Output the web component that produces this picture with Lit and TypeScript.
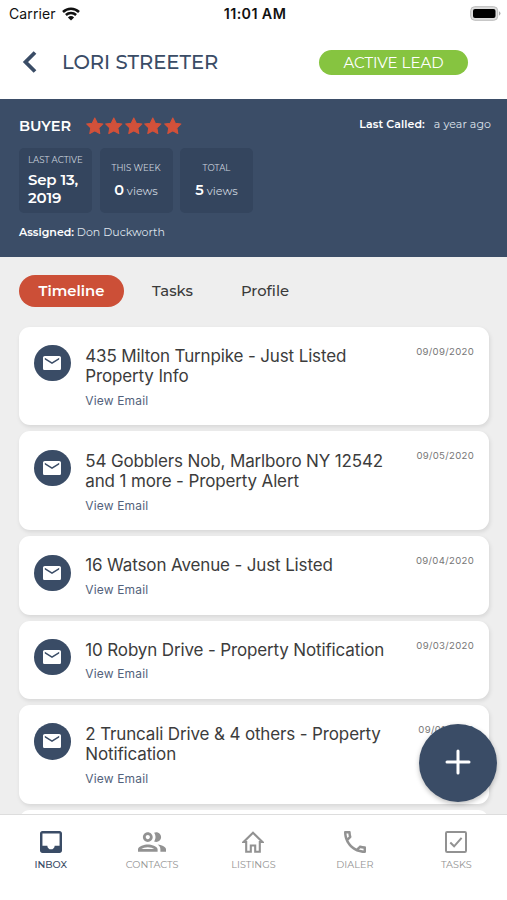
import { LitElement, html, css, svg } from "lit";
import { customElement, property, state } from "lit/decorators.js";
import { classMap } from "lit/directives/class-map.js";

interface Entry {
  lines: string[];
  date: string;
}

const ENTRIES: Entry[] = [
  { lines: ["435 Milton Turnpike - Just Listed", "Property Info"], date: "09/09/2020" },
  { lines: ["54 Gobblers Nob, Marlboro NY 12542", "and 1 more - Property Alert"], date: "09/05/2020" },
  { lines: ["16 Watson Avenue - Just Listed"], date: "09/04/2020" },
  { lines: ["10 Robyn Drive - Property Notification"], date: "09/03/2020" },
  { lines: ["2 Truncali Drive & 4 others - Property", "Notification"], date: "09/01/2020" },
];

const NAV = [
  {
    label: "INBOX",
    cls: "inbox",
    box: "3 3 18 18",
    icon: svg`<path d="M19 3H5c-1.1 0-2 .9-2 2v14c0 1.1.9 2 2 2h14c1.1 0 2-.9 2-2V5c0-1.1-.9-2-2-2zm0 12h-4c0 1.66-1.35 3-3 3s-3-1.34-3-3H5V5h14v10z"/>`,
  },
  {
    label: "CONTACTS",
    cls: "contacts",
    box: "2 5 20 14",
    icon: svg`<path d="M9 13.75c-2.34 0-7 1.17-7 3.5V19h14v-1.75c0-2.33-4.66-3.5-7-3.5zM4.34 17c.84-.58 2.87-1.25 4.66-1.25s3.82.67 4.66 1.25H4.34zM9 12c1.93 0 3.5-1.57 3.5-3.5S10.93 5 9 5 5.5 6.57 5.5 8.5 7.07 12 9 12zm0-5c.83 0 1.5.67 1.5 1.5S9.83 10 9 10s-1.5-.67-1.5-1.5S8.17 7 9 7zm7.04 6.81c1.16.84 1.96 1.96 1.96 3.44V19h4v-1.75c0-2.02-3.5-3.17-5.96-3.44zM15 12c1.93 0 3.5-1.57 3.5-3.5S16.93 5 15 5c-.54 0-1.04.13-1.5.35.63.89 1 1.98 1 3.15s-.37 2.26-1 3.15c.46.22.96.35 1.5.35z"/>`,
  },
  {
    label: "LISTINGS",
    cls: "listings",
    box: "0 0 22 22",
    icon: svg`<path d="M11 1.7L1.6 11H4.2V20.7H8.8V14.5H13.2V20.7H17.8V11H20.4z" fill="none" stroke="currentColor" stroke-width="2.1"/>`,
  },
  {
    label: "DIALER",
    cls: "dialer",
    box: "3 3 18 18",
    icon: svg`<path d="M6.54 5c.06.89.21 1.76.45 2.59l-1.2 1.2c-.41-1.2-.67-2.47-.76-3.79h1.51m9.86 12.02c.85.24 1.72.39 2.6.45v1.49c-1.32-.09-2.59-.35-3.8-.75l1.2-1.19M7.5 3H4c-.55 0-1 .45-1 1 0 9.39 7.61 17 17 17 .55 0 1-.45 1-1v-3.49c0-.55-.45-1-1-1-1.24 0-2.45-.2-3.57-.57-.1-.04-.21-.05-.31-.05-.26 0-.51.1-.71.29l-2.2 2.2c-2.83-1.45-5.15-3.76-6.59-6.59l2.2-2.2c.28-.28.36-.67.25-1.02C8.7 6.45 8.5 5.25 8.5 4c0-.55-.45-1-1-1z"/>`,
  },
  {
    label: "TASKS",
    cls: "tasks",
    box: "0 0 22 22",
    icon: svg`<g fill="none" stroke="currentColor" stroke-width="2"><rect x="1" y="1" width="20" height="20" rx="1.2"/><path d="M5.3 11.5L9.1 15.3L16.6 6.8"/></g>`,
  },
];

@customElement("timeline-card")
class TimelineCard extends LitElement {
  @property({ attribute: false }) entry!: Entry;

  static styles = css`
    :host { display: block; }
    .card {
      display: flex;
      box-sizing: border-box;
      background: #fff;
      border-radius: 11px;
      box-shadow: 1px 2px 4px rgba(0, 0, 0, 0.1);
      padding: 18.2px 15px 16.8px;
      align-items: flex-start;
    }
    .badge { width: 36.7px; height: 36.7px; border-radius: 50%; background: #3a4c66; display: flex; align-items: center; justify-content: center; flex: none; }
    .badge svg { width: 18px; height: 14.4px; display: block; fill: #fff; margin-right: 0.8px; }
    .body { flex: 1; margin-left: 14.6px; margin-top: 0.9px; white-space: nowrap; }
    .title { font-size: 17px; line-height: 20.7px; color: #3c3c3c; letter-spacing: -0.14px; }
    .link { font-size: 12px; line-height: 16px; margin-top: 5.6px; color: #53627c; letter-spacing: 0.16px; }
    .date { font-size: 9.6px; line-height: 12px; margin-top: 0.8px; color: #777; letter-spacing: 0.3px; }
  `;

  render() {
    return html`<div class="card">
      <div class="badge"><svg viewBox="2 4 20 16"><path d="M20 4H4c-1.1 0-1.99.9-1.99 2L2 18c0 1.1.9 2 2 2h16c1.1 0 2-.9 2-2V6c0-1.1-.9-2-2-2zm0 4l-8 5-8-5V6l8 5 8-5v2z"/></svg></div>
      <div class="body">
        ${this.entry.lines.map((l) => html`<div class="title">${l}</div>`)}
        <div class="link">View Email</div>
      </div>
      <div class="date">${this.entry.date}</div>
    </div>`;
  }
}

@customElement("app-root")
class AppRoot extends LitElement {
  @state() private tab = "Timeline";

  static styles = css`
    :host { display: flex; flex-direction: column; height: 900px; width: 507px; overflow: hidden; background: #fff; font-family: Inter, "Liberation Sans", sans-serif; }
    svg { display: block; }
    .brand { font-family: Montserrat, Inter, sans-serif; }
    .status { display: grid; grid-template-columns: 1fr auto 1fr; align-items: center; height: 27px; flex: none; padding: 0 6px 0 9px; font-size: 14px; color: #111; }
    .carrier { display: flex; align-items: center; gap: 6px; letter-spacing: 0.1px; }
    .clock { font-weight: 600; font-size: 14.3px; letter-spacing: 0.4px; }
    .battery { justify-self: end; }
    .header { display: flex; align-items: center; height: 72px; flex: none; box-sizing: border-box; padding: 0 39px 2px 22px; }
    .name { flex: 1; margin-left: 24px; font-size: 19.6px; font-weight: 500; color: #3a4c66; }
    .pill { width: 149px; height: 25px; border-radius: 13px; background: #86c440; color: #fff; font-size: 15px; display: flex; align-items: center; justify-content: center; }
    .lead { height: 158px; flex: none; box-sizing: border-box; background: #3b4d67; color: #fff; padding: 17px 16px 0 19px; }
    .row { display: flex; align-items: center; height: 20px; }
    .buyer { font-size: 14.5px; font-weight: 600; width: 65.6px; }
    .stars { display: flex; flex: 1; }
    .called { font-size: 11px; color: #dfe4ec; display: flex; gap: 9px; margin-top: -4px; letter-spacing: 0.08px; }
    .called b, .assigned b { font-weight: 600; color: #fff; }
    .stats { display: flex; gap: 7.5px; margin-top: 12px; }
    .stat { width: 73px; height: 65px; box-sizing: border-box; border-radius: 5px; background: #34455e; display: flex; flex-direction: column; align-items: center; justify-content: center; white-space: nowrap; }
    .stat.left { align-items: flex-start; padding-left: 9px; }
    .cap { font-size: 8.6px; line-height: 11px; color: #cdd4df; margin-top: 1px; }
    .cap.gap { margin-bottom: 6px; }
    .day { font-size: 15px; line-height: 18px; font-weight: 600; letter-spacing: -0.2px; }
    .day.first { margin-top: 5px; }
    .count { font-size: 11.2px; line-height: 18px; color: #cdd4df; padding-top: 1px; }
    .count b { font-size: 14.5px; font-weight: 600; color: #fff; }
    .assigned { font-size: 11px; line-height: 14px; margin-top: 12px; color: #dfe4ec; }
    .content { flex: 1; min-height: 0; overflow: hidden; background: #eee; }
    .tabs { display: flex; padding: 18px 19px 0; height: 32px; }
    .tab { display: flex; align-items: center; justify-content: center; width: 97px; box-sizing: border-box; padding-bottom: 1px; border-radius: 16px; font-size: 14.8px; font-weight: 500; color: #3a3a3a; }
    .tab.profile { width: 88px; }
    .tab.active { width: 105px; background: #cc4f37; color: #fff; font-weight: 600; }
    .list { display: flex; flex-direction: column; gap: 6px; padding: 19.6px 18px 0 19px; }
    .peek { height: 40px; border-radius: 11px; background: #fff; }
    .nav { height: 86px; flex: none; box-sizing: border-box; border-top: 1px solid #ddd; background: #fff; display: grid; grid-template-columns: repeat(5, 1fr); padding-top: 15.6px; color: #929292; z-index: 1; }
    .item { display: flex; flex-direction: column; align-items: center; font-size: 9.7px; line-height: 12px; }
    .item svg { width: 22px; height: 22px; fill: currentColor; margin-bottom: 6.2px; }
    .item.contacts svg { width: 28px; }
    .item.active { color: #3a4c66; font-weight: 500; }
    .fab { position: absolute; left: 419px; top: 724px; width: 78px; height: 78px; border-radius: 50%; background: #3a4c66; box-shadow: 0 2px 5px rgba(0, 0, 0, 0.25); display: flex; align-items: center; justify-content: center; }
    .fab svg { margin-bottom: 2px; }
  `;

  render() {
    return html`
      <div class="status">
        <div class="carrier"><span>Carrier</span>
          <svg width="18" height="14" viewBox="0 0 18 14" fill="none" stroke="#111" stroke-width="2.5"><path d="M1 5a11.5 11.5 0 0 1 16 0M3.9 8a7.3 7.3 0 0 1 10.2 0"/><path d="M9 13.6L5.9 10.5a4.5 4.5 0 0 1 6.2 0z" fill="#111" stroke="none"/></svg>
        </div>
        <div class="clock">11:01 AM</div>
        <svg class="battery" width="31" height="15" viewBox="0 0 31 15"><rect x=".7" y=".7" width="27" height="13.6" rx="4" fill="#ddd" stroke="#bbb"/><rect x="3" y="3" width="22.5" height="9" rx="2" fill="#000"/><path d="M29 5.3q3 2.2 0 4.4z" fill="#aaa"/></svg>
      </div>
      <div class="header brand">
        <svg width="16" height="24" viewBox="0 0 16 24"><path d="M13 2.5L3.5 12L13 21.5" fill="none" stroke="#3a4c66" stroke-width="3.8"/></svg>
        <div class="name">LORI STREETER</div>
        <div class="pill">ACTIVE LEAD</div>
      </div>
      <div class="lead brand">
        <div class="row">
          <div class="buyer">BUYER</div>
          <div class="stars">${[1, 2, 3, 4, 5].map(() => html`<svg width="19.6" height="19.6" viewBox="0.6 0.4 18.8 18.8"><path fill="#d2513a" stroke="#d2513a" stroke-width="1" stroke-linejoin="round" d="M10 2.4L12.4 7.3L17.8 8L13.9 11.8L14.8 17.2L10 14.7L5.2 17.2L6.1 11.8L2.2 8L7.6 7.3z"/></svg>`)}</div>
          <div class="called"><b>Last Called:</b><span>a year ago</span></div>
        </div>
        <div class="stats">
          <div class="stat left"><div class="cap">LAST ACTIVE</div><div class="day first">Sep 13,</div><div class="day">2019</div></div>
          <div class="stat"><div class="cap gap">THIS WEEK</div><div class="count"><b>0</b> views</div></div>
          <div class="stat"><div class="cap gap">TOTAL</div><div class="count"><b>5</b> views</div></div>
        </div>
        <div class="assigned"><b>Assigned:</b> Don Duckworth</div>
      </div>
      <div class="content">
        <div class="tabs brand">${["Timeline", "Tasks", "Profile"].map((t) => html`<div class=${classMap({ tab: true, active: t === this.tab, profile: t === "Profile" })} @click=${() => (this.tab = t)}>${t}</div>`)}</div>
        <div class="list">
          ${ENTRIES.map((e) => html`<timeline-card .entry=${e}></timeline-card>`)}
          <div class="peek"></div>
        </div>
      </div>
      <div class="nav brand">${NAV.map((n, i) => html`<div class=${classMap({ item: true, active: i === 0, [n.cls]: true })}><svg viewBox=${n.box}>${n.icon}</svg><span>${n.label}</span></div>`)}</div>
      <div class="fab"><svg width="26" height="26" viewBox="0 0 26 26"><path d="M13 2v22M2 13h22" stroke="#fff" stroke-width="3" stroke-linecap="round"/></svg></div>
    `;
  }
}
